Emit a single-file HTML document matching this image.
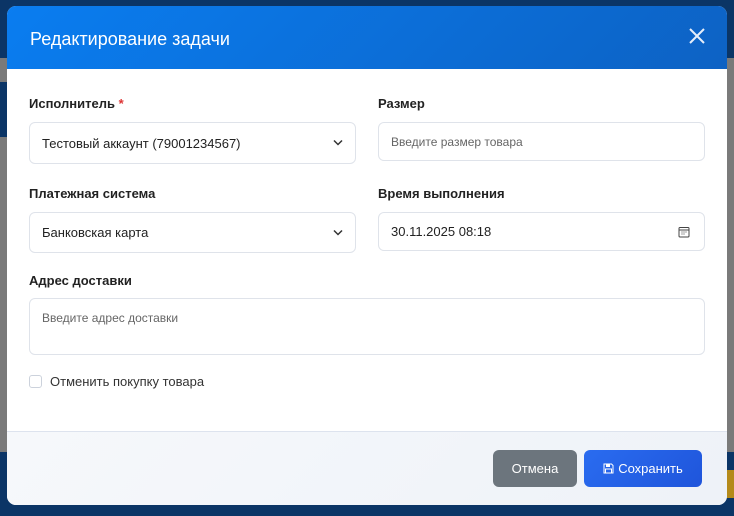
<!DOCTYPE html>
<html><head><meta charset="utf-8"><style>
*{box-sizing:border-box;margin:0;padding:0}
body{width:734px;height:516px;overflow:hidden;position:relative;font-family:"Liberation Sans","DejaVu Sans",sans-serif;background:#7a7a7a}
.bgtop{position:absolute;left:0;top:0;width:734px;height:58px;background:#0b3566}
.bgmid{position:absolute;left:0;top:82px;width:10px;height:55px;background:#0b3566}
.bgbot{position:absolute;left:0;top:452px;width:734px;height:64px;background:#0b3566}
.yel{position:absolute;left:727px;top:470px;width:7px;height:28px;background:#b48a1a}
.modal{position:absolute;left:7px;top:6px;width:720px;height:499px;background:#fff;border-radius:9px;overflow:hidden}
.hdr{height:63px;background:linear-gradient(135deg,#0a7df0,#0d62c4);color:#fff;font-size:18px;padding:23px 0 0 23px}
.x{position:absolute;right:20px;top:20px;width:20px;height:20px}
.lbl{position:absolute;font-size:13px;font-weight:bold;color:#222}
.in{position:absolute;border:1px solid #dfe3ea;border-radius:6px;font-size:13px;color:#222;padding-left:12px;display:flex;align-items:center}
.ph{color:#666;font-size:12px}
.chev{position:absolute;right:12px;top:50%;margin-top:-4px}
.ftr{position:absolute;left:0;top:425px;width:720px;height:74px;background:linear-gradient(135deg,#f6f8fb,#eef2f8);border-top:1px solid #dde3ee}
.btn{position:absolute;top:18px;height:37px;border-radius:6px;color:#fff;font-size:13px;display:flex;align-items:center;justify-content:center}
</style></head><body>
<div class="bgtop"></div><div class="bgmid"></div><div class="bgbot"></div><div class="yel"></div>
<div class="modal">
<div class="hdr">Редактирование задачи</div>
<svg class="x" viewBox="0 0 20 20"><path d="M3 3L17 17M17 3L3 17" stroke="#e6eefa" stroke-width="2"/></svg>
<div class="lbl" style="left:22px;top:90px">Исполнитель <span style="color:#d33">*</span></div>
<div class="lbl" style="left:371px;top:90px">Размер</div>
<div class="in" style="left:22px;top:116px;width:327px;height:42px">Тестовый аккаунт (79001234567)<svg class="chev" width="10" height="7" viewBox="0 0 10 7"><path d="M1 1.5L5 5.5L9 1.5" stroke="#333" stroke-width="1.5" fill="none"/></svg></div>
<div class="in" style="left:371px;top:116px;width:327px;height:39px"><span class="ph">Введите размер товара</span></div>
<div class="lbl" style="left:22px;top:180px">Платежная система</div>
<div class="lbl" style="left:371px;top:180px">Время выполнения</div>
<div class="in" style="left:22px;top:206px;width:327px;height:41px">Банковская карта<svg class="chev" width="10" height="7" viewBox="0 0 10 7"><path d="M1 1.5L5 5.5L9 1.5" stroke="#333" stroke-width="1.5" fill="none"/></svg></div>
<div class="in" style="left:371px;top:206px;width:327px;height:39px">30.11.2025 08:18<svg style="position:absolute;right:14px;top:13px" width="12" height="12" viewBox="0 0 12 12"><rect x="1" y="1.5" width="10" height="9.5" rx="1" stroke="#444" fill="none"/><path d="M1 4H11" stroke="#444"/><path d="M3.5 6h1M5.5 6h1M7.5 6h1M3.5 8h1M5.5 8h1" stroke="#444"/></svg></div>
<div class="lbl" style="left:22px;top:267px">Адрес доставки</div>
<div class="in" style="left:22px;top:292px;width:676px;height:57px;align-items:flex-start;padding-top:12px"><span class="ph">Введите адрес доставки</span></div>
<div style="position:absolute;left:22px;top:369px;width:13px;height:13px;border:1px solid #ccd2dc;border-radius:3px"></div>
<div style="position:absolute;left:43px;top:368px;font-size:13px;color:#333">Отменить покупку товара</div>
<div class="ftr">
<div class="btn" style="left:486px;width:84px;background:#6c757d">Отмена</div>
<div class="btn" style="left:577px;width:118px;background:linear-gradient(135deg,#2a6cf0,#1f55db)"><svg width="11" height="11" viewBox="0 0 11 11" style="margin-right:4px"><path d="M1 1H8.5L10 2.5V10H1Z" stroke="#fff" fill="none"/><rect x="3" y="1" width="4" height="3" fill="#fff"/><rect x="2.5" y="6" width="6" height="4" stroke="#fff" fill="none"/></svg>Сохранить</div>
</div>
</div>
</body></html>
